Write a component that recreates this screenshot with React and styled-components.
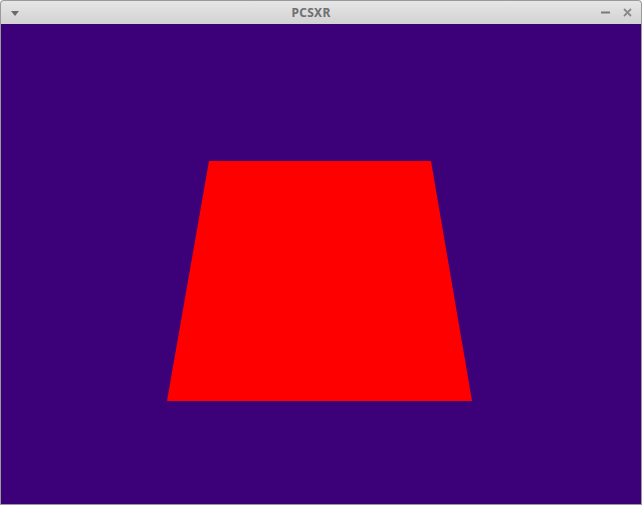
import React from "react";
import styled, { createGlobalStyle } from "styled-components";

const GlobalStyle = createGlobalStyle`
  html, body {
    margin: 0;
    padding: 0;
    background: #ffffff;
  }
`;

const Window = styled.div`
  width: 642px;
  height: 505px;
  box-sizing: border-box;
  display: flex;
  flex-direction: column;
  background: #9a9a9a;
  border-radius: 4px 4px 0 0;
  overflow: hidden;
  font-family: "Noto Sans", "DejaVu Sans", sans-serif;
`;

const TitleBar = styled.div`
  height: 23px;
  margin: 1px 1px 0 1px;
  border-radius: 3px 3px 0 0;
  background: linear-gradient(#e6e6e6, #d2d2d2);
  display: grid;
  grid-template-columns: 50px 1fr 70px;
  align-items: center;
`;

const MenuButton = styled.div`
  display: flex;
  align-items: center;
  padding-left: 10px;
  padding-top: 1px;
`;

const Title = styled.div`
  text-align: center;
  font-size: 12px;
  font-weight: bold;
  color: #707070;
  letter-spacing: 0.3px;
`;

const Controls = styled.div`
  display: flex;
  justify-content: flex-end;
  align-items: center;
  gap: 13px;
  padding-right: 9px;
`;

const Screen = styled.div`
  flex: 1;
  margin: 0 1px 1px 1px;
  background: #3c0078;
  display: flex;
`;

export default function App() {
  return (
    <>
      <GlobalStyle />
      <Window>
        <TitleBar>
          <MenuButton>
            <svg width="8" height="5" viewBox="0 0 8 5">
              <polygon points="0,0 8,0 4,5" fill="#6a6a6a" />
            </svg>
          </MenuButton>
          <Title>PCSXR</Title>
          <Controls>
            <svg width="9" height="9" viewBox="0 0 9 9">
              <rect x="0" y="3.5" width="9" height="2" fill="#7a7a7a" />
            </svg>
            <svg width="9" height="9" viewBox="0 0 9 9">
              <path d="M1 1 L8 8 M8 1 L1 8" stroke="#8a8a8a" strokeWidth="1.8" />
            </svg>
          </Controls>
        </TitleBar>
        <Screen>
          <svg width="640" height="480" viewBox="0 0 640 480">
            <polygon points="208,137 430,137 471,377 166,377" fill="#ff0000" />
          </svg>
        </Screen>
      </Window>
    </>
  );
}
